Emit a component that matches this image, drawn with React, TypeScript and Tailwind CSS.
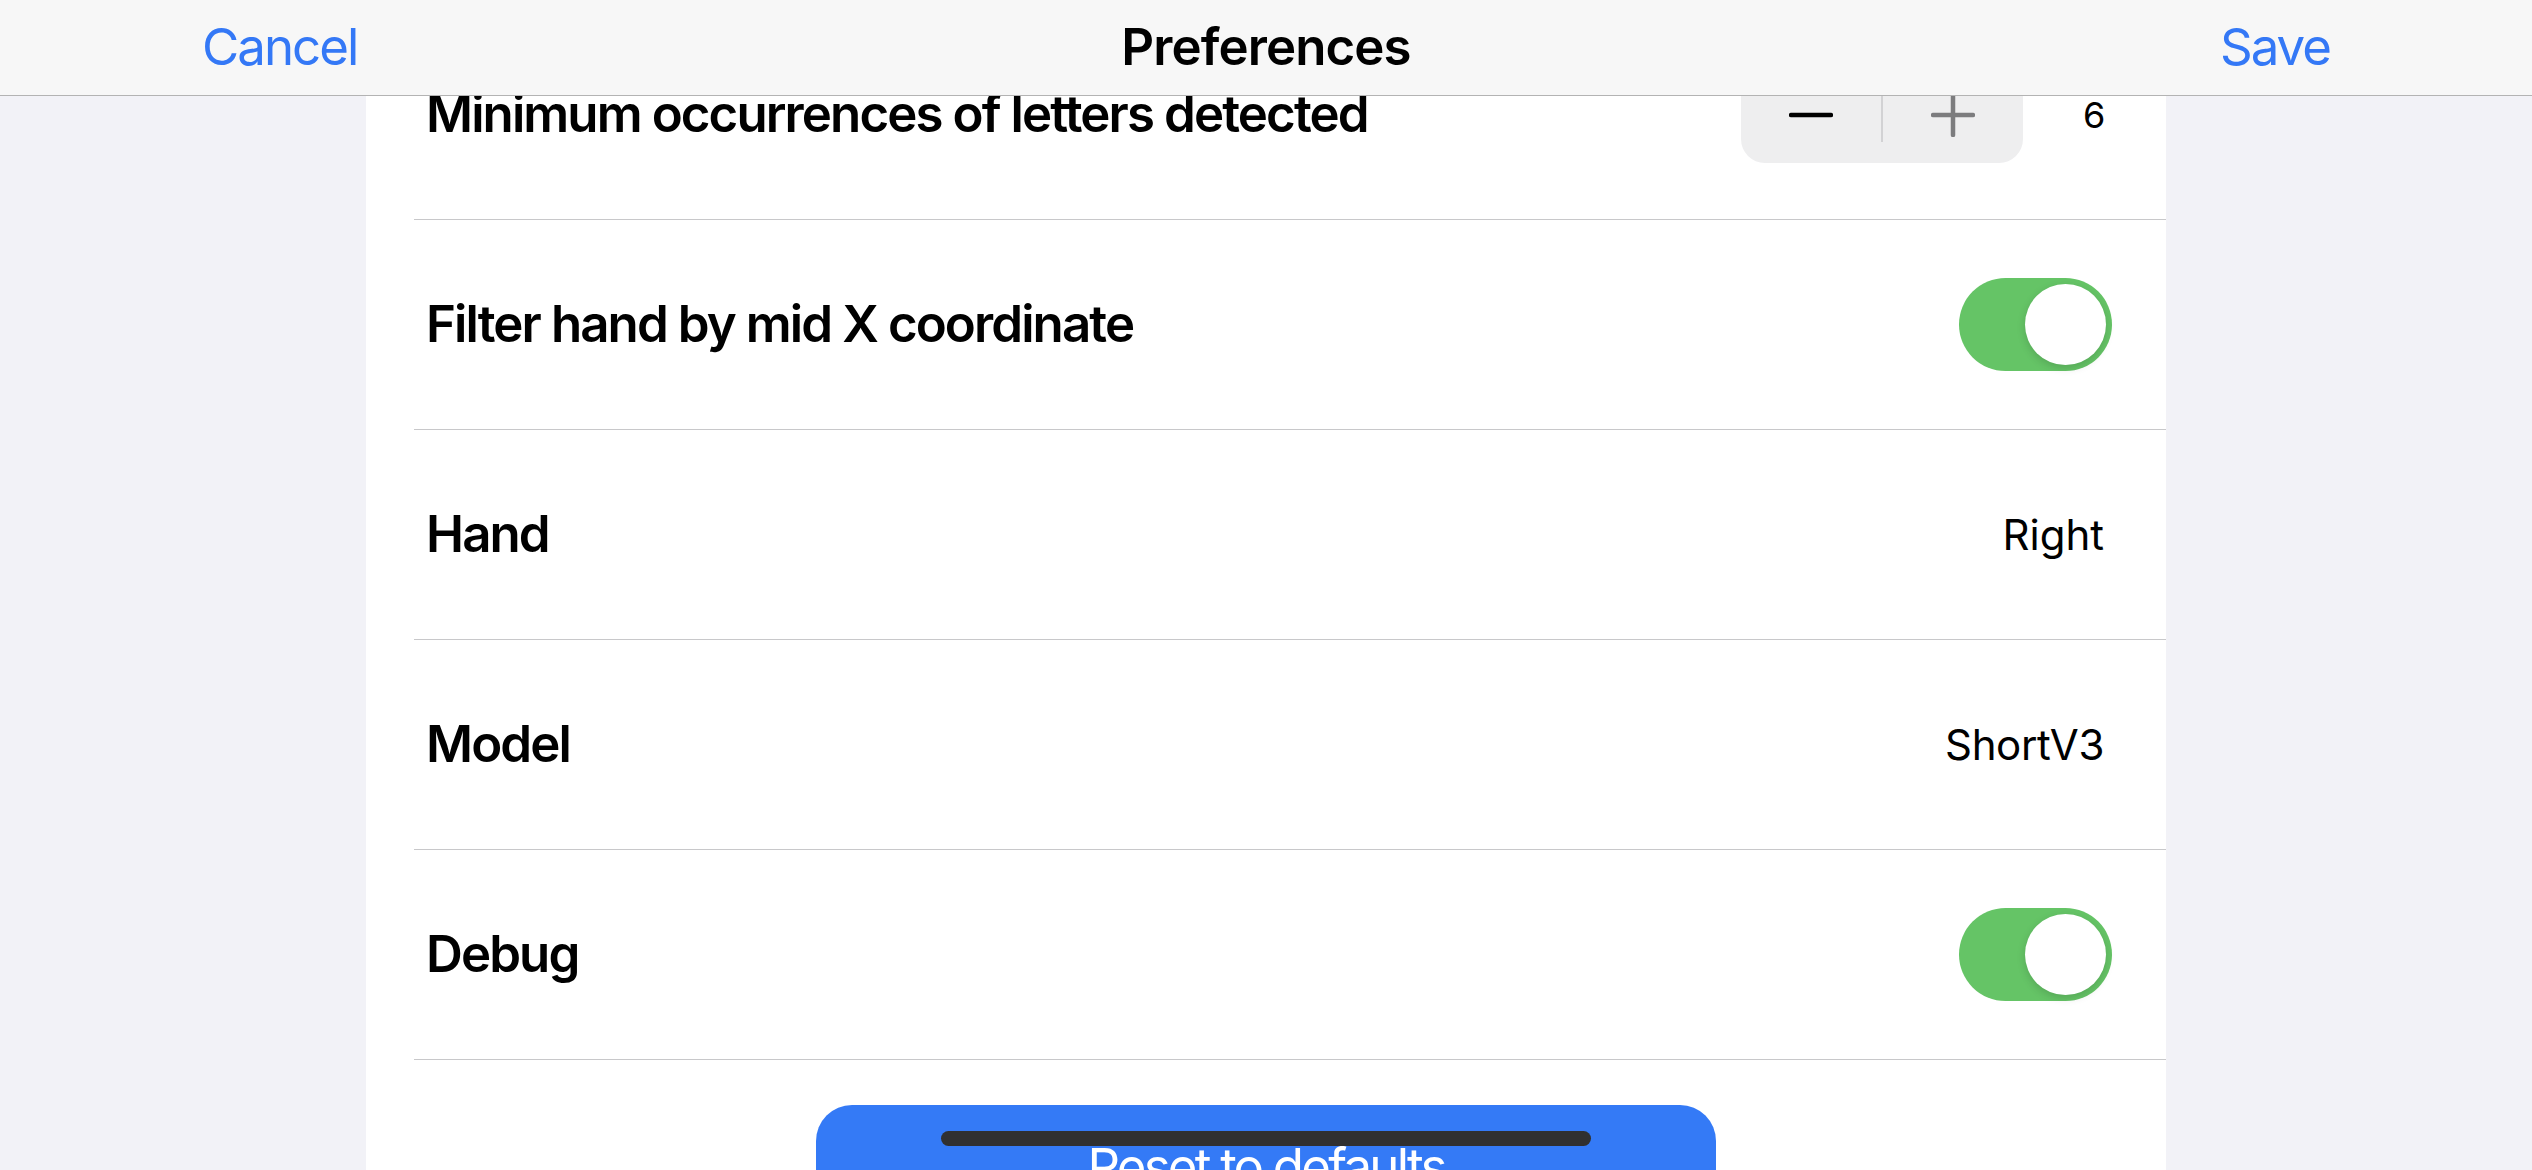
import { useState } from "react";

const font = { fontFamily: "Inter, 'Noto Sans', sans-serif" };

function Toggle({ on, onChange }: { on: boolean; onChange: () => void }) {
  return (
    <button
      type="button"
      onClick={onChange}
      className={`flex h-[93px] w-[153px] items-center rounded-full p-[6px] ${
        on ? "justify-end bg-[#65c466]" : "justify-start bg-[#e9e9ea]"
      }`}
    >
      <span className="block h-[81px] w-[81px] rounded-full bg-white shadow-[0_3px_8px_rgba(0,0,0,0.15)]" />
    </button>
  );
}

function Stepper({ value, setValue }: { value: number; setValue: (n: number) => void }) {
  const max = 6;
  return (
    <div className="mr-[8px] flex items-center">
      <div className="flex h-[96px] w-[282px] items-center rounded-[24px] bg-[#eeeeef]">
        <button
          type="button"
          onClick={() => setValue(Math.max(1, value - 1))}
          className="flex h-full flex-1 items-center justify-center"
        >
          <svg width="44" height="44" viewBox="0 0 44 44">
            <line x1="2" y1="22" x2="42" y2="22" stroke="#000" strokeWidth="4.5" strokeLinecap="round" />
          </svg>
        </button>
        <div className="h-[54px] w-[2px] bg-[#d2d2d4]" />
        <button
          type="button"
          onClick={() => setValue(Math.min(max, value + 1))}
          className="flex h-full flex-1 items-center justify-center"
        >
          <svg width="44" height="44" viewBox="0 0 44 44">
            <g stroke={value >= max ? "#7c7c7e" : "#000"} strokeWidth="4.5" strokeLinecap="round">
              <line x1="2" y1="22" x2="42" y2="22" />
              <line x1="22" y1="2" x2="22" y2="42" />
            </g>
          </svg>
        </button>
      </div>
      <span className="ml-[60px] w-[21px] text-right text-[36px] text-black">{value}</span>
    </div>
  );
}

function Row({ label, children }: { label: string; children: React.ReactNode }) {
  return (
    <div className="ml-[48px] flex h-[210px] items-center justify-between border-b border-[#c8c8ca] pl-[12px] pr-[54px]">
      <span className="text-[51px] font-semibold tracking-[-1.9px] text-black">{label}</span>
      {children}
    </div>
  );
}

export default function App() {
  const [minOcc, setMinOcc] = useState(6);
  const [filterHand, setFilterHand] = useState(true);
  const [debug, setDebug] = useState(true);

  return (
    <div style={font} className="relative h-[1170px] w-[2532px] overflow-hidden bg-[#f2f2f7]">
      {/* nav bar sits over the scrolled list */}
      <div className="absolute inset-x-0 top-0 z-10 grid h-[96px] grid-cols-[1fr_auto_1fr] items-center border-b border-[#b3b3b3] bg-[#f7f7f7] px-[202px]">
        <button type="button" className="justify-self-start text-[51px] tracking-[-2px] text-[#3478f6]">
          Cancel
        </button>
        <h1 className="text-[51px] font-semibold tracking-[-0.9px] text-black">Preferences</h1>
        <button type="button" className="justify-self-end text-[51px] tracking-[-2px] text-[#3478f6]">
          Save
        </button>
      </div>

      <div className="flex justify-center">
        <div className="mt-[10px] w-[1800px] bg-white">
          <Row label="Minimum occurrences of letters detected">
            <Stepper value={minOcc} setValue={setMinOcc} />
          </Row>
          <Row label="Filter hand by mid X coordinate">
            <Toggle on={filterHand} onChange={() => setFilterHand(!filterHand)} />
          </Row>
          <Row label="Hand">
            <span className="mr-[8px] text-[42px] text-black">Right</span>
          </Row>
          <Row label="Model">
            <span className="mr-[8px] text-[42px] tracking-[-0.4px] text-black">ShortV3</span>
          </Row>
          <Row label="Debug">
            <Toggle on={debug} onChange={() => setDebug(!debug)} />
          </Row>
          <div className="flex justify-center pt-[45px] pb-[60px]">
            <button
              type="button"
              className="flex h-[124px] w-[900px] items-center justify-center rounded-[36px] bg-[#347af6] text-[51px] tracking-[-2.8px] text-white"
            >
              Reset to defaults
            </button>
          </div>
        </div>
      </div>

      {/* home indicator */}
      <div className="absolute bottom-[24px] left-[941px] h-[15px] w-[650px] rounded-full bg-[#303030]" />
    </div>
  );
}
